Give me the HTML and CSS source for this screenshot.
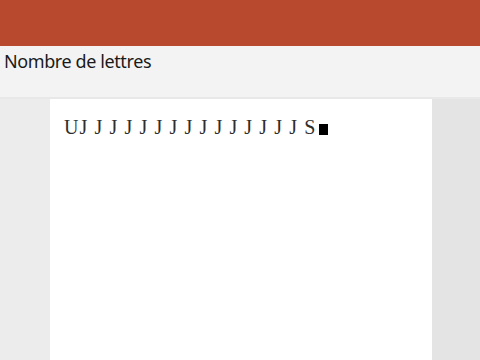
FILE: index.html
```html
<!DOCTYPE html>
<html>
  <head>
  <meta charset="utf-8">
  <title>Nombre de lettres</title>
  <link rel="stylesheet" href="styles.css">
  </head>
  <body>
    <div class="barre"></div>
    <div class="entete">
      <h1 class="titre">Nombre de lettres</h1>
    </div>
    <div class="zone">
      <div class="marge_gauche"></div>
      <div class="page">
        <p class="lettres">UJ J J J J J J J J J J J J J J S<span class="curseur"></span></p>
      </div>
      <div class="marge_droite"></div>
    </div>
  </body>
</html>
```

FILE: styles.css
```css
    html, body{ margin: 0; padding: 0; height: 100%; overflow: hidden; }
    body{ display: flex; flex-direction: column; background-color: #ececec; }

    .barre{
      height: 46px;
      background-color: #b9492e;
      flex: none;
    }

    .entete{
      height: 51px;
      background-color: #f3f3f3;
      border-bottom: 2px solid #e8e8e8;
      flex: none;
    }
    .titre{
      margin: 0;
      padding: 3px 0 0 4px;
      font-family: "Noto Sans", sans-serif;
      font-weight: normal;
      font-size: 18px;
      line-height: 24px;
      color: #1a1a1a;
      letter-spacing: -0.4px;
    }

    .zone{
      flex: 1;
      display: flex;
    }
    .marge_gauche{ width: 50px; background-color: #ececec; }
    .page{ width: 382px; background-color: white; }
    .marge_droite{ flex: 1; background-color: #e4e4e4; }

    .lettres{
      margin: 0;
      padding: 16px 0 0 14px;
      font-family: "Liberation Serif", serif;
      font-size: 20px;
      line-height: 24px;
      color: #2e2e2e;
      letter-spacing: 1.1px;
      white-space: pre;
    }
    .curseur{
      display: inline-block;
      width: 9px;
      height: 11px;
      margin-left: 2px;
      background-color: black;
      vertical-align: -1px;
    }
```
